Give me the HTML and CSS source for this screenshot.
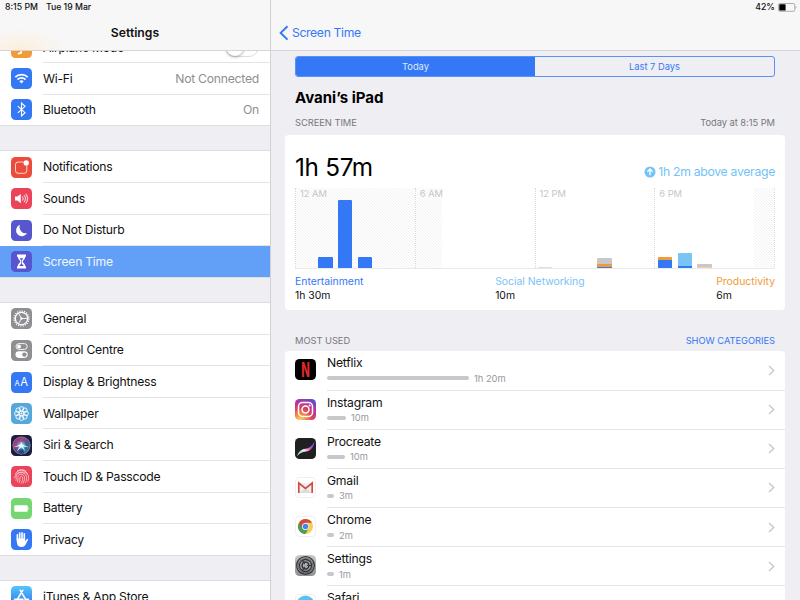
FILE: index.html
```html
<!DOCTYPE html>
<html lang="en">
<head>
  <meta charset="UTF-8">
  <title>Settings - Screen Time</title>
  <meta name="viewport" content="width=device-width, initial-scale=1.0">
  <link rel="stylesheet" href="styles.css">
</head>
<body>
  <div class="app">

    <!-- Sidebar -->
    <aside class="sidebar">
      <header class="navbar side-nav">
        <div class="status"><span>8:15 PM</span><span>Tue 19 Mar</span></div>
        <h1>Settings</h1>
      </header>
      <div class="side-scroll">
        <ul class="group">
          <li class="row">
            <svg class="icon orange" viewBox="0 0 21 21"><path d="M10 3v14M4 12l6-4 7 4M7 17l4-2" stroke="#fff" stroke-width="1.5" fill="none"/></svg>
            <div class="cell"><span class="airplane">Airplane Mode</span><span class="switch"></span></div>
          </li>
          <li class="row">
            <svg class="icon blue" viewBox="0 0 21 21"><g fill="none" stroke="#fff" stroke-width="1.7"><path d="M4.3 9.2a8.8 8.8 0 0 1 12.4 0"/><path d="M6.5 11.6a5.7 5.7 0 0 1 8 0"/></g><path d="M8.4 13.2a3 3 0 0 1 4.2 0l-2.1 2.2z" fill="#fff"/></svg>
            <div class="cell"><span>Wi-Fi</span><span class="value">Not Connected</span></div>
          </li>
          <li class="row">
            <svg class="icon blue" viewBox="0 0 21 21"><path d="M6.8 7.2l7.2 6.5-3.5 3.2V4.1L14 7.3l-7.2 6.5" fill="none" stroke="#fff" stroke-width="1.1"/></svg>
            <div class="cell"><span>Bluetooth</span><span class="value">On</span></div>
          </li>
        </ul>

        <ul class="group">
          <li class="row">
            <svg class="icon red" viewBox="0 0 21 21"><path d="M12.5 5H7a2.5 2.5 0 0 0-2.5 2.5v6.3A2.5 2.5 0 0 0 7 16.300h6.300a2.500 2.500 0 0 0 2.500-2.500V8.500" fill="none" stroke="#fff" stroke-opacity=".85" stroke-width=".9"/><circle cx="15.200" cy="5.900" r="2.700" fill="#fff"/></svg>
            <div class="cell"><span>Notifications</span></div>
          </li>
          <li class="row">
            <svg class="icon pink" viewBox="0 0 21 21"><path d="M4 8.600h2.300L9.800 6v9.200L6.300 12.600H4z" fill="#fff"/><path d="M11.300 8.500a3 3 0 0 1 0 4.200M13 7.100a5 5 0 0 1 0 7M14.800 5.800a7.500 7.500 0 0 1 0 9.600" fill="none" stroke="#fff" stroke-width=".9"/></svg>
            <div class="cell"><span>Sounds</span></div>
          </li>
          <li class="row">
            <svg class="icon indigo" viewBox="0 0 21 21"><path d="M9 4.800a5.900 5.900 0 1 0 7.200 8.300A6.200 6.200 0 0 1 9 4.800z" fill="#fff"/></svg>
            <div class="cell"><span>Do Not Disturb</span></div>
          </li>
          <li class="row selected">
            <svg class="icon indigo" viewBox="0 0 21 21"><path d="M6 3.500h9v2.200h-.8c0 2.700-2.500 3.500-2.500 4.800s2.500 2.100 2.500 4.800h.8v2.200H6v-2.200h.8c0-2.700 2.500-3.500 2.500-4.800S6.800 8.400 6.800 5.700H6z" fill="#fff"/><path d="M8.700 7.300h3.600l-1.500 2.300v3l2 2.300H8.200l2-2.300v-3z" fill="#5756ce"/></svg>
            <div class="cell"><span>Screen Time</span></div>
          </li>
        </ul>

        <ul class="group">
          <li class="row">
            <svg class="icon gray" viewBox="0 0 21 21"><g fill="none" stroke="#fff"><circle cx="10.500" cy="10.500" r="7.400" stroke-width="1.400" stroke-dasharray="1.160 1.160"/><circle cx="10.500" cy="10.500" r="6.200" stroke-width="1.300"/><path d="M10.500 10.500h5.500M10.500 10.500L7.700 5.700M10.500 10.500l-2.800 4.800" stroke-width=".9"/></g><circle cx="10.500" cy="10.500" r="1.200" fill="#fff"/></svg>
            <div class="cell"><span>General</span></div>
          </li>
          <li class="row">
            <svg class="icon gray" viewBox="0 0 21 21"><rect x="5" y="3.600" width="11.200" height="5.800" rx="2.900" fill="none" stroke="#fff" stroke-width=".9"/><circle cx="8" cy="6.500" r="1.900" fill="#fff"/><rect x="4.500" y="11.300" width="12.200" height="6.600" rx="3.300" fill="#fff"/><circle cx="13.400" cy="14.600" r="2.200" fill="#8e8e93"/></svg>
            <div class="cell"><span>Control Centre</span></div>
          </li>
          <li class="row">
            <svg class="icon blue" viewBox="0 0 21 21"><text x="3.600" y="14.100" class="aa-small">A</text><text x="9.300" y="14.100" class="aa-big">A</text></svg>
            <div class="cell"><span>Display &amp; Brightness</span></div>
          </li>
          <li class="row">
            <svg class="icon cyan" viewBox="0 0 21 21"><g fill="none" stroke="#fff" stroke-width=".9"><circle cx="10.500" cy="5.900" r="2.300"/><circle cx="13.800" cy="7.200" r="2.300"/><circle cx="15.100" cy="10.500" r="2.300"/><circle cx="13.800" cy="13.800" r="2.300"/><circle cx="10.500" cy="15.100" r="2.300"/><circle cx="7.200" cy="13.800" r="2.300"/><circle cx="5.900" cy="10.500" r="2.300"/><circle cx="7.200" cy="7.200" r="2.300"/><circle cx="10.500" cy="10.500" r="2.400"/></g><circle cx="10.500" cy="10.500" r="1.100" fill="#fff"/></svg>
            <div class="cell"><span>Wallpaper</span></div>
          </li>
          <li class="row">
            <svg class="icon siri" viewBox="0 0 21 21">
              <defs>
                <linearGradient id="orb" x1="0" y1="0" x2="1" y2="1"><stop offset="0" stop-color="#8c3f86"/><stop offset=".35" stop-color="#b64d8d"/><stop offset=".6" stop-color="#3d6796"/><stop offset="1" stop-color="#27a5ad"/></linearGradient>
                <radialGradient id="glow"><stop offset="0" stop-color="#fff"/><stop offset=".35" stop-color="#bdeaf6" stop-opacity=".75"/><stop offset="1" stop-color="#39a7dd" stop-opacity="0"/></radialGradient>
              </defs>
              <circle cx="10.500" cy="10.500" r="8.700" fill="url(#orb)" opacity=".85"/>
              <circle cx="10.500" cy="10.500" r="8.700" fill="none" stroke="#a9a0c8" stroke-width=".5"/>
              <path d="M2 11q4 4 5 7M10.500 10L8 18.500h5z" fill="#293b8b"/>
              <circle cx="10.500" cy="10.500" r="5.500" fill="url(#glow)"/>
              <path d="M10.500 7l1 2.700 6.500 2.500-6-.8 2.500 5-4-4.400-5 4.500 3.500-5.200-6.500.6 7-2.500z" fill="#e8fbff"/>
            </svg>
            <div class="cell"><span>Siri &amp; Search</span></div>
          </li>
          <li class="row">
            <svg class="icon pink" viewBox="0 0 21 21"><g fill="none" stroke="#fff" stroke-opacity=".85" stroke-width=".7"><path d="M6 5.300a7 7 0 0 1 9 0M4.200 8a7 7 0 0 1 12.600 0M3.800 12.500c-.7-8 13.700-9 13.700-1.200 0 2-.3 3.300-.8 4.200"/><path d="M4.900 14.800c1-2-.5-4 .8-6 2.200-3.700 9.600-2.700 9.800 2.500 0 2.500-.4 4-1.200 5.500"/><path d="M6.300 16.100c1.700-3-.2-4.800 1-6.500 1.600-2.400 6-1.500 6.200 1.800 0 2.600-.6 4.300-1.500 6"/><path d="M8 17.100c1.600-3 .3-5.300 1.300-6.300 1-.9 2.500-.4 2.400 1.100 0 2-.6 4-1.600 5.600"/></g></svg>
            <div class="cell"><span>Touch ID &amp; Passcode</span></div>
          </li>
          <li class="row">
            <svg class="icon green" viewBox="0 0 21 21"><rect x="3.300" y="7.200" width="13.400" height="6.600" rx="1" fill="#fff"/><path d="M17.200 9.200c.9.300.9 2.300 0 2.600z" fill="#fff"/></svg>
            <div class="cell"><span>Battery</span></div>
          </li>
          <li class="row">
            <svg class="icon blue" viewBox="0 0 21 21"><path d="M6.400 10.500V5.800M8.700 10V4M11 10V3.700M13.300 10V4.900" stroke="#fff" stroke-width="1.600" stroke-linecap="round"/><path d="M5.600 9.500h8.500v2.700l1.500-2q.6-.7 1.300-.3.400.3 0 1.100l-2.500 4.900q-1 2.100-3.700 2.100-4 0-4.700-3.500-.4-2-.4-5z" fill="#fff"/></svg>
            <div class="cell"><span>Privacy</span></div>
          </li>
        </ul>

        <ul class="group">
          <li class="row">
            <svg class="icon store" viewBox="0 0 21 21"><path d="M11.700 4.300L6 14M9.300 4.300L15 14M3.500 13.200h8.500M14 13.200h3.500" stroke="#fff" stroke-width="1.600" stroke-linecap="round"/></svg>
            <div class="cell"><span>iTunes &amp; App Store</span></div>
          </li>
        </ul>
      </div>
    </aside>

    <!-- Screen Time detail -->
    <main class="detail">
      <header class="navbar">
        <div class="status status-right">
          <span>42%</span>
          <svg width="19" height="9" viewBox="0 0 19 9"><rect x=".5" y=".5" width="16.300" height="7.800" rx="1.600" fill="none" stroke="#9b9b9b" stroke-width=".8"/><rect x="1.300" y="1.300" width="6.300" height="6.200" rx=".6" fill="#000"/><path d="M17.600 3c1.100.4 1.100 2.500 0 2.900z" fill="#9b9b9b"/></svg>
        </div>
        <a class="back"><svg width="10" height="16" viewBox="0 0 10 16"><path d="M8.500 1.200L1.700 7.900l6.800 6.700" fill="none" stroke="#3478f6" stroke-width="2"/></svg><span>Screen Time</span></a>
      </header>

      <div class="content">
        <div class="segmented">
          <div class="segment active">Today</div>
          <div class="segment">Last 7 Days</div>
        </div>
        <h2>Avani’s iPad</h2>
        <div class="caption">
          <span>SCREEN TIME</span>
          <span>Today at 8:15 PM</span>
        </div>

        <section class="card usage">
          <div class="total">
            <span class="hours">1h 57m</span>
            <span class="average"><svg width="12" height="12" viewBox="0 0 12 12"><circle cx="6" cy="6" r="5.500" fill="#72c3f7"/><path d="M6 9.200V3.300M3.400 5.700L6 3.100l2.600 2.600" fill="none" stroke="#fff" stroke-width="1.400"/></svg><span>1h 2m above average</span></span>
          </div>
          <div class="chart">
            <div class="quarter">
              <div class="idle six"></div>
              <span>12 AM</span>
              <div class="bars">
                <div class="bar"></div>
                <div class="bar"><i class="c-ent" style="height: 11px"></i></div>
                <div class="bar"><i class="c-ent" style="height: 68px"></i></div>
                <div class="bar"><i class="c-ent" style="height: 11.500px"></i></div>
                <div class="bar"></div>
                <div class="bar"></div>
              </div>
            </div>
            <div class="quarter">
              <div class="idle early"></div>
              <span>6 AM</span>
            </div>
            <div class="quarter">
              <span>12 PM</span>
              <div class="bars">
                <div class="bar"><i class="c-faint" style="height: 1px"></i></div>
                <div class="bar"></div>
                <div class="bar"></div>
                <div class="bar"><i class="c-other" style="height: 6px"></i><i class="c-prod" style="height: 3px"></i><i class="c-ent" style="height: 1px"></i></div>
                <div class="bar"></div>
                <div class="bar"></div>
              </div>
            </div>
            <div class="quarter">
              <div class="idle late"></div>
              <span>6 PM</span>
              <div class="bars">
                <div class="bar"><i class="c-prod" style="height: 3px"></i><i class="c-ent" style="height: 8px"></i></div>
                <div class="bar"><i class="c-social" style="height: 13px"></i><i class="c-ent" style="height: 2px"></i></div>
                <div class="bar"><i class="c-other" style="height: 3px"></i><i class="c-prod pale" style="height: 1px"></i></div>
                <div class="bar"></div>
                <div class="bar"></div>
                <div class="bar"></div>
              </div>
            </div>
          </div>
          <div class="legend">
            <div><b class="t-ent">Entertainment</b><span>1h 30m</span></div>
            <div><b class="t-social">Social Networking</b><span>10m</span></div>
            <div><b class="t-prod">Productivity</b><span>6m</span></div>
          </div>
        </section>

        <div class="caption most">
          <span>MOST USED</span>
          <a class="show">SHOW CATEGORIES</a>
        </div>

        <section class="card apps">
          <div class="app-row">
            <svg class="icon black" viewBox="0 0 21 21"><text x="6.300" y="17.600" class="netflix" textLength="8.600" lengthAdjust="spacingAndGlyphs">N</text></svg>
            <div class="app-cell">
              <div><span class="name">Netflix</span><div class="meter"><i style="width: 142px"></i><span>1h 20m</span></div></div>
              <svg class="chevron" viewBox="0 0 7 11"><path d="M1 1l4.700 4.500L1 10"/></svg>
            </div>
          </div>
          <div class="app-row">
            <svg class="icon" viewBox="0 0 21 21">
              <defs><radialGradient id="insta" cx=".25" cy="1" r="1.150"><stop offset="0" stop-color="#fdd36b"/><stop offset=".25" stop-color="#f48a43"/><stop offset=".5" stop-color="#df3f63"/><stop offset=".75" stop-color="#b036a5"/><stop offset="1" stop-color="#5650cf"/></radialGradient></defs>
              <rect width="21" height="21" fill="url(#insta)"/>
              <g fill="none" stroke="#fff" stroke-width="1.500"><rect x="3.500" y="3.500" width="14" height="14" rx="4"/><circle cx="10.500" cy="10.500" r="3.500"/></g><circle cx="14.600" cy="6.400" r="1" fill="#fff"/>
            </svg>
            <div class="app-cell">
              <div><span class="name">Instagram</span><div class="meter"><i style="width: 19px"></i><span>10m</span></div></div>
              <svg class="chevron" viewBox="0 0 7 11"><path d="M1 1l4.700 4.500L1 10"/></svg>
            </div>
          </div>
          <div class="app-row">
            <svg class="icon charcoal" viewBox="0 0 21 21">
              <defs><linearGradient id="brush" x1="0" y1="1" x2="1" y2="0"><stop offset="0" stop-color="#fff3a0"/><stop offset=".2" stop-color="#8be7d1"/><stop offset=".4" stop-color="#f6e6ee"/><stop offset=".6" stop-color="#e45bb6"/><stop offset=".8" stop-color="#7653e8"/><stop offset="1" stop-color="#4ba0f4"/></linearGradient></defs>
              <path d="M2 18.200c1.500-4.500 4-7 8.300-7.500 4-.5 7-2.700 9.200-7.500-.8 6-3.500 9.500-8.500 10.400-3.800.6-6.500 1.700-9 4.600z" fill="url(#brush)"/>
            </svg>
            <div class="app-cell">
              <div><span class="name">Procreate</span><div class="meter"><i style="width: 18px"></i><span>10m</span></div></div>
              <svg class="chevron" viewBox="0 0 7 11"><path d="M1 1l4.700 4.500L1 10"/></svg>
            </div>
          </div>
          <div class="app-row">
            <svg class="icon white" viewBox="0 0 21 21"><path d="M3.500 6h14v10h-14z" fill="#efefef"/><path d="M4.500 16l6-5 6 5z" fill="#dcdcdc"/><path d="M3.800 16V6l6.700 5.300L17.200 6v10" fill="none" stroke="#d54b3d" stroke-width="1.700"/></svg>
            <div class="app-cell">
              <div><span class="name">Gmail</span><div class="meter"><i style="width: 7px"></i><span>3m</span></div></div>
              <svg class="chevron" viewBox="0 0 7 11"><path d="M1 1l4.700 4.500L1 10"/></svg>
            </div>
          </div>
          <div class="app-row">
            <svg class="icon white" viewBox="0 0 21 21"><circle cx="10.500" cy="10.500" r="7.500" fill="#f8cf4b"/><path d="M10.500 10.500L4 6.750A7.500 7.500 0 0 0 10.500 18l3.200-5.700z" fill="#4a9f57"/><path d="M4 6.750A7.500 7.500 0 0 1 17 6.750h-6.500l-3.200 5.500z" fill="#d14b3f"/><circle cx="10.500" cy="10.500" r="3.500" fill="#fff"/><circle cx="10.500" cy="10.500" r="2.800" fill="#4b83ee"/></svg>
            <div class="app-cell">
              <div><span class="name">Chrome</span><div class="meter"><i style="width: 7px"></i><span>2m</span></div></div>
              <svg class="chevron" viewBox="0 0 7 11"><path d="M1 1l4.700 4.500L1 10"/></svg>
            </div>
          </div>
          <div class="app-row">
            <svg class="icon metal" viewBox="0 0 21 21"><g fill="none" stroke="#333438"><circle cx="10.500" cy="10.500" r="8.900" stroke-width="1.200"/><circle cx="10.500" cy="10.500" r="7.300" stroke-width="1" stroke-dasharray=".8 .5"/><circle cx="10.500" cy="10.500" r="6" stroke-width="1.300"/><circle cx="10.500" cy="10.500" r="3.400" stroke-width="1.500"/><path d="M12 10.500h5M9.700 9.200L7.200 5M9.700 11.800L7.200 16" stroke-width="1.200"/></g><circle cx="10.500" cy="10.500" r="1.200" fill="#aaa"/></svg>
            <div class="app-cell">
              <div><span class="name">Settings</span><div class="meter"><i style="width: 7px"></i><span>1m</span></div></div>
              <svg class="chevron" viewBox="0 0 7 11"><path d="M1 1l4.700 4.500L1 10"/></svg>
            </div>
          </div>
          <div class="app-row">
            <svg class="icon white" viewBox="0 0 21 21"><circle cx="10.500" cy="10.500" r="9" fill="#5bc0f5"/><path d="M16 5l-4.500 6.500-2-2z" fill="#f04b43"/></svg>
            <div class="app-cell">
              <div><span class="name">Safari</span><div class="meter"><i style="width: 7px"></i><span>1m</span></div></div>
              <svg class="chevron" viewBox="0 0 7 11"><path d="M1 1l4.700 4.500L1 10"/></svg>
            </div>
          </div>
        </section>
      </div>
    </main>

  </div>
</body>
</html>
```
FILE: styles.css
```css
/* Base Styles */
body {
  margin: 0;
  font-family: Inter, "Liberation Sans", sans-serif;
  font-size: 12.2px;
  color: #111;
  background: #efeef3;
}
h1, h2, ul {
  margin: 0;
  padding: 0;
  list-style: none;
}
.app {
  display: flex;
  width: 800px;
  height: 600px;
  overflow: hidden;
}

/* Top bars */
.navbar {
  position: relative;
  z-index: 2;
  flex: none;
  height: 50px;
  background: #f7f7f8;
  border-bottom: 1px solid #d5d5d8;
}
.side-nav {
  background: radial-gradient(ellipse 45px 22px at 20px 50px, #fcefdc, rgba(252,239,220,0)), #f7f7f7;
}
.status {
  display: flex;
  height: 15px;
  line-height: 15px;
  padding-left: 5px;
  gap: 8px;
  font-size: 8.7px;
  font-weight: 500;
}
.status-right {
  justify-content: flex-end;
  align-items: center;
  gap: 3px;
  padding-right: 3px;
}
h1 {
  text-align: center;
  font-size: 12.2px;
  font-weight: 600;
  line-height: 36px;
}
.back {
  display: flex;
  align-items: center;
  gap: 3px;
  height: 35px;
  padding-left: 8px;
  color: #3478f6;
  letter-spacing: -0.35px;
}

/* Sidebar */
.sidebar {
  display: flex;
  flex-direction: column;
  width: 270px;
  background: #efeef3;
}
.side-scroll {
  flex: 1;
  min-height: 0;
  margin-top: -20.5px;
}
.group {
  background: #fff;
  border-top: 1px solid #dededf;
  border-bottom: 1px solid #dededf;
  margin-bottom: 24.2px;
}
.row {
  display: flex;
  align-items: center;
  height: 31.6px;
  padding-left: 11px;
  gap: 11px;
}
.group .row:last-child {
  height: 30.6px;
}
.icon {
  flex: none;
  width: 21px;
  height: 21px;
  border-radius: 4.5px;
}
.cell {
  flex: 1;
  display: flex;
  align-items: center;
  justify-content: space-between;
  height: 100%;
  box-sizing: border-box;
  border-bottom: 1px solid #e3e3e5;
  padding-right: 11px;
  letter-spacing: -0.25px;
}
.row:last-child .cell {
  border-bottom: 0;
}
.airplane {
  padding-top: 2px;
}
.value {
  color: #8e8e93;
}
.switch {
  width: 34px;
  height: 20px;
  box-sizing: border-box;
  border: 1px solid #dedede;
  border-radius: 10px;
}
.switch::before {
  content: "";
  display: block;
  width: 18px;
  height: 18px;
  border-radius: 50%;
  background: #fff;
  box-shadow: 0 1px 3px rgba(0,0,0,0.35);
}
.selected {
  background: #62a0f8;
  color: #f1f6ff;
}
.orange { background: #f19a38; }
.blue { background: #3478f6; }
.red { background: #eb4d3d; }
.pink { background: #eb445a; }
.indigo { background: #5756ce; }
.gray { background: #8e8e93; }
.cyan { background: #56a8db; }
.green { background: #76d672; }
.siri { background: #1d1c3c; }
.store { background: linear-gradient(#54c5fa, #2e72ee); }
.black { background: #000; overflow: visible; }
.charcoal { background: #202022; }
.white { background: #fff; box-shadow: inset 0 0 0 1px #f0f0f0; }
.metal { background: linear-gradient(#c8c9cb, #8e8f92); }
.aa-small {
  font-size: 7.5px;
  fill: #fff;
}
.aa-big {
  font-size: 11.2px;
  fill: #fff;
}
.netflix {
  font-size: 19.5px;
  font-weight: 800;
  fill: #d92b27;
}

/* Detail */
.detail {
  flex: 1;
  display: flex;
  flex-direction: column;
  min-width: 0;
  border-left: 1px solid #d2d2d6;
}
.content {
  padding: 5px 15px 0 14px;
}
.segmented {
  display: flex;
  height: 21px;
  margin: 0 10px;
  box-sizing: border-box;
  border: 1px solid #5b91f7;
  border-radius: 3px;
  overflow: hidden;
  font-size: 9.3px;
  line-height: 20px;
  text-align: center;
  color: #3478f6;
}
.segment {
  flex: 1;
}
.active {
  background: #3478f6;
  color: #dce8fe;
}
h2 {
  margin: 11px 10px 0;
  font-size: 15px;
  font-weight: 700;
  line-height: 20px;
  color: #000;
}
.caption {
  display: flex;
  justify-content: space-between;
  margin: 9px 10px 0;
  height: 12px;
  line-height: 12px;
  font-size: 9.3px;
  letter-spacing: -0.02px;
  color: #77777c;
}
.card {
  background: #fff;
  border-radius: 4px;
}
.usage {
  margin-top: 6px;
  height: 175px;
  padding: 18px 10px 0;
  box-sizing: border-box;
}
.total {
  display: flex;
  justify-content: space-between;
  height: 35px;
}
.hours {
  font-size: 24.3px;
  line-height: 29px;
  letter-spacing: -0.3px;
  color: #000;
}
.average {
  display: flex;
  align-items: center;
  gap: 2px;
  height: 37px;
  letter-spacing: -0.28px;
  color: #72c3f7;
}

/* Chart */
.chart {
  display: flex;
  height: 81px;
  box-sizing: border-box;
  border-bottom: 1px solid #e9e9eb;
  border-right: 1px dotted #d8d8da;
}
.quarter {
  position: relative;
  flex: 1;
  display: flex;
  box-sizing: border-box;
  border-left: 1px dotted #d8d8da;
}
.quarter span {
  position: absolute;
  left: 4px;
  top: 0;
  line-height: 12px;
  font-size: 9.3px;
  color: #c5c5c8;
}
.bars {
  position: relative;
  flex: 1;
  display: flex;
  align-items: flex-end;
}
.bar {
  flex: 1;
  padding: 0 3px 0 2.5px;
}
.bar i {
  display: block;
}
.bar i:first-child {
  border-radius: 1px 1px 0 0;
}
/* hours without any screen time */
.idle {
  position: absolute;
  top: 0;
  bottom: 0;
  background: repeating-linear-gradient(45deg, #fff 0 1.2px, #f1f1f2 1.2px 2.12px);
}
.six { left: 0; right: 0; }
.early { left: 0; width: 26px; }
.late { right: 0; width: 20px; }
.c-ent { background: #3478f6; }
.c-social { background: #78c4f5; }
.c-prod { background: #f19a38; }
.c-other { background: #c7c7cc; }
.c-faint { background: #dcdcdf; }
.pale { opacity: 0.5; }
.legend {
  display: flex;
  justify-content: space-between;
  padding-top: 6px;
  font-size: 10.4px;
  line-height: 14px;
}
.legend b {
  display: block;
  font-weight: 400;
}
.t-ent { color: #3478f6; }
.t-social { color: #78c4f5; }
.t-prod { color: #f19a38; }

/* Most used */
.most {
  margin-top: 25px;
}
.show {
  color: #3478f6;
}
.apps {
  margin-top: 4.4px;
}
.app-row {
  display: flex;
  height: 39.15px;
  padding-left: 10px;
  gap: 11px;
}
.app-row .icon {
  margin-top: 8px;
}
.app-cell {
  flex: 1;
  display: flex;
  justify-content: space-between;
  align-items: center;
  box-sizing: border-box;
  border-bottom: 1px solid #e4e4e6;
  padding-right: 10px;
}
.name {
  display: block;
  line-height: 16px;
  letter-spacing: -0.22px;
}
.meter {
  display: flex;
  align-items: center;
  gap: 5px;
  height: 14px;
  font-size: 9.3px;
  color: #98989c;
}
.meter i {
  height: 4px;
  border-radius: 2px;
  background: #c7c7cc;
}
.chevron {
  width: 7px;
  height: 11px;
  fill: none;
  stroke: #c7c7cc;
  stroke-width: 1.4;
}
```
